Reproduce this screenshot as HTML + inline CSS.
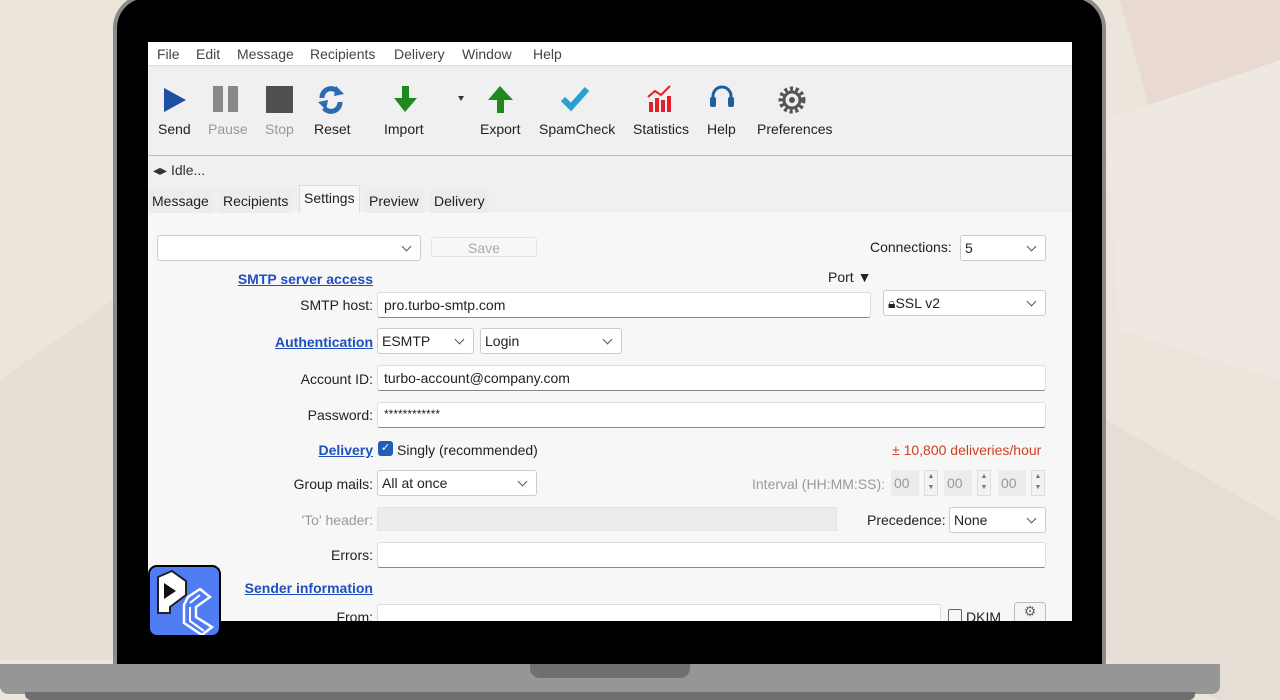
<!DOCTYPE html>
<html><head><meta charset="utf-8"><style>
*{margin:0;padding:0;box-sizing:border-box}
body{width:1280px;height:700px;overflow:hidden;background:#ebe5dc;font-family:"Liberation Sans",sans-serif;position:relative}
.abs{position:absolute}
.bez{left:113px;top:-6px;width:993px;height:672px;background:#000;border:4px solid #8a8a8a;border-radius:34px 34px 0 0;border-bottom:none}
.scr{left:148px;top:42px;width:924px;height:579px;background:#f7f7f7;overflow:hidden;font-size:14px;color:#222}
.menu{position:absolute;left:0;top:0;width:924px;height:24px;background:#fff;border-bottom:1px solid #ddd}
.menu span{position:absolute;top:4px;color:#444}
.tb{position:absolute;left:0;top:24px;width:924px;height:90px;background:#f0f0f0;border-bottom:1px solid #bbb}
.tb .l{position:absolute;top:55px;font-size:14px;color:#222}
.g{color:#999!important}
.st{position:absolute;left:0;top:114px;width:924px;height:56px;background:#f0f0f0}
.tab{position:absolute;top:147px;height:24px;padding:4px 4px;background:#ececec;font-size:14px}
.lbl{position:absolute;text-align:right;width:220px;left:5px;font-size:14px}
.lnk{color:#1f4fbf;font-weight:bold;text-decoration:underline}
.in{position:absolute;height:26px;background:#fff;border:1px solid #ddd;border-bottom:1px solid #888;border-radius:3px;padding:4px 6px;font-size:14px}
.sel{position:absolute;height:26px;background:#fff;border:1px solid #ccc;border-radius:3px;padding:4px 4px;font-size:14px}
.sel:after{content:"";position:absolute;right:10px;top:7px;width:6px;height:6px;border-right:1.3px solid #555;border-bottom:1.3px solid #555;transform:rotate(45deg)}
.sp{position:absolute;width:14px;height:26px;border:1px solid #ddd;background:#f2f2f2;font-size:7px;color:#777;text-align:center;line-height:11px}
</style></head><body>
<svg class="abs" style="left:0;top:0" width="1280" height="700">
<polygon points="1120,0 1280,0 1280,120 1150,110" fill="#e8d9d2"/>
<polygon points="1105,120 1280,60 1280,380 1120,330" fill="#eee8e1"/>
<polygon points="0,380 113,300 113,660 0,660" fill="#e5dfd6"/>
<polygon points="1106,420 1280,520 1280,700 1220,700 1106,660" fill="#e4ded5"/>
</svg>
<div class="abs bez"></div>
<div class="abs" style="left:0;top:664px;width:1220px;height:30px;background:#969696;border-radius:0 0 8px 8px"></div>
<div class="abs" style="left:25px;top:692px;width:1170px;height:8px;background:#6e6e6e;border-radius:0 0 6px 6px"></div>
<div class="abs" style="left:530px;top:664px;width:160px;height:14px;background:#6f6f6f;border-radius:0 0 10px 10px"></div>
<div class="abs scr">
<div class="menu"><span style="left:9px">File</span><span style="left:48px">Edit</span><span style="left:89px">Message</span><span style="left:162px">Recipients</span><span style="left:246px">Delivery</span><span style="left:314px">Window</span><span style="left:385px">Help</span></div>
<div class="tb">
<svg class="abs" style="left:0;top:0" width="924" height="55">
<polygon points="16,22 38,34 16,46" fill="#1e4fa0"/>
<rect x="65" y="20" width="10" height="26" fill="#888"/><rect x="80" y="20" width="10" height="26" fill="#888"/>
<rect x="118" y="20" width="27" height="27" fill="#505050"/>
<g fill="none" stroke="#2a6bb3" stroke-width="5"><path d="M174,32 A9,9 0 0 1 190,26"/><path d="M192,36 A9,9 0 0 1 176,42"/></g>
<polygon points="188,20 196,28 186,30" fill="#2a6bb3"/><polygon points="178,44 170,36 180,34" fill="#2a6bb3"/>
<rect x="254" y="20" width="7" height="14" fill="#1e8a1e"/><polygon points="246,32 269,32 257,46" fill="#1e8a1e"/>
<polygon points="310,30 316,30 313,35" fill="#333"/>
<rect x="349" y="33" width="7" height="14" fill="#1e8a1e"/><polygon points="340,34 365,34 352,20" fill="#1e8a1e"/>
<path d="M415,33 l8,8 l16,-18" fill="none" stroke="#2aa0d0" stroke-width="6"/>
<g fill="#e0202a"><rect x="501" y="36" width="4" height="10"/><rect x="507" y="32" width="4" height="14"/><rect x="513" y="34" width="4" height="12"/><rect x="519" y="30" width="4" height="16"/><path d="M500,31 l7,-6 l6,4 l9,-9" stroke="#e0202a" stroke-width="2" fill="none"/></g>
<path d="M565,36 v-6 a9,9 0 0 1 18,0 v6" fill="none" stroke="#1e5fa0" stroke-width="3"/><rect x="562" y="31" width="6" height="10" rx="2" fill="#1e5fa0"/><rect x="580" y="31" width="6" height="10" rx="2" fill="#1e5fa0"/>
<circle cx="644" cy="34" r="11" fill="none" stroke="#555" stroke-width="5" stroke-dasharray="3 2.5"/><circle cx="644" cy="34" r="8" fill="none" stroke="#555" stroke-width="3"/><circle cx="644" cy="34" r="3" fill="#555"/>
</svg>
<span class="l" style="left:10px">Send</span><span class="l g" style="left:60px">Pause</span><span class="l g" style="left:117px">Stop</span><span class="l" style="left:166px">Reset</span><span class="l" style="left:236px">Import</span><span class="l" style="left:332px">Export</span><span class="l" style="left:391px">SpamCheck</span><span class="l" style="left:485px">Statistics</span><span class="l" style="left:559px">Help</span><span class="l" style="left:609px">Preferences</span>
</div>
<div class="st"><span class="abs" style="left:5px;top:6px;color:#333">◂▸ Idle...</span></div>
<span class="tab" style="left:0">Message</span><span class="tab" style="left:71px">Recipients</span><span class="tab" style="left:151px;top:143px;height:28px;background:#f7f7f7;border:1px solid #ddd;border-bottom:none">Settings</span><span class="tab" style="left:217px">Preview</span><span class="tab" style="left:282px">Delivery</span>
<div class="sel" style="left:9px;top:193px;width:264px"></div>
<div class="abs" style="left:283px;top:195px;width:106px;height:20px;border:1px solid #e2e2e2;border-radius:3px;color:#aaa;text-align:center;padding-top:2px">Save</div>
<span class="abs" style="left:722px;top:197px">Connections:</span><div class="sel" style="left:812px;top:193px;width:86px">5</div>
<span class="lbl lnk" style="top:229px">SMTP server access</span>
<span class="abs" style="left:680px;top:227px">Port ▼</span>
<span class="lbl" style="top:255px">SMTP host:</span><div class="in" style="left:229px;top:250px;width:494px">pro.turbo-smtp.com</div>
<div class="sel" style="left:735px;top:248px;width:163px">🔒︎SSL v2</div>
<span class="lbl lnk" style="top:292px">Authentication</span><div class="sel" style="left:229px;top:286px;width:97px">ESMTP</div><div class="sel" style="left:332px;top:286px;width:142px">Login</div>
<span class="lbl" style="top:329px">Account ID:</span><div class="in" style="left:229px;top:323px;width:669px">turbo-account@company.com</div>
<span class="lbl" style="top:365px">Password:</span><div class="in" style="left:229px;top:360px;width:669px;font-size:12px">************</div>
<span class="lbl lnk" style="top:400px">Delivery</span>
<div class="abs" style="left:230px;top:399px;width:15px;height:15px;background:#1f5fb8;border-radius:3px;color:#fff;font-size:11px;text-align:center;line-height:15px">✓</div>
<span class="abs" style="left:249px;top:400px">Singly (recommended)</span>
<span class="abs" style="left:744px;top:400px;color:#d04020">± 10,800 deliveries/hour</span>
<span class="lbl" style="top:434px">Group mails:</span><div class="sel" style="left:229px;top:428px;width:160px">All at once</div>
<span class="abs" style="left:604px;top:434px;color:#999">Interval (HH:MM:SS):</span>
<div class="abs" style="left:743px;top:428px;width:28px;height:26px;background:#ececec;color:#999;padding:5px 3px">00</div>
<div class="abs" style="left:796px;top:428px;width:28px;height:26px;background:#ececec;color:#999;padding:5px 3px">00</div>
<div class="abs" style="left:850px;top:428px;width:28px;height:26px;background:#ececec;color:#999;padding:5px 3px">00</div>
<div class="sp" style="left:776px;top:428px">▲<br>▼</div>
<div class="sp" style="left:829px;top:428px">▲<br>▼</div>
<div class="sp" style="left:883px;top:428px">▲<br>▼</div>
<span class="lbl" style="top:470px;color:#999">'To' header:</span><div class="abs" style="left:229px;top:465px;width:460px;height:24px;background:#ececec;border:1px solid #e4e4e4"></div>
<span class="abs" style="left:719px;top:470px">Precedence:</span><div class="sel" style="left:801px;top:465px;width:97px">None</div>
<span class="lbl" style="top:505px">Errors:</span><div class="in" style="left:229px;top:500px;width:669px"></div>
<span class="lbl lnk" style="top:538px">Sender information</span>
<span class="lbl" style="top:567px">From:</span><div class="in" style="left:229px;top:562px;width:564px"></div>
<div class="abs" style="left:800px;top:567px;width:14px;height:14px;border:1px solid #666;border-radius:2px"></div><span class="abs" style="left:818px;top:567px">DKIM</span>
<div class="abs" style="left:866px;top:560px;width:32px;height:26px;border:1px solid #bbb;border-radius:4px;background:#f5f5f5;text-align:center;color:#666">⚙</div>
</div>
<div class="abs" style="left:148px;top:565px;width:73px;height:72px;background:#4f7cf2;border:2px solid #000;border-radius:9px;overflow:hidden">
<svg width="73" height="72">
<path d="M8,10 L22,4 L36,14 L36,28 L20,40 L20,46 L8,46 Z" fill="#fff" stroke="#222" stroke-width="2"/>
<path d="M14,16 L26,24 L14,32 Z" fill="#111"/>
<path d="M38,30 L50,22 L60,30 L46,40 L46,50 L62,60 L52,68 L34,56 L34,38 Z" fill="none" stroke="#fff" stroke-width="2.5"/>
<path d="M40,36 L50,28 M40,40 L40,54 L54,64" fill="none" stroke="#fff" stroke-width="2"/>
</svg>
</div>
</body></html>
